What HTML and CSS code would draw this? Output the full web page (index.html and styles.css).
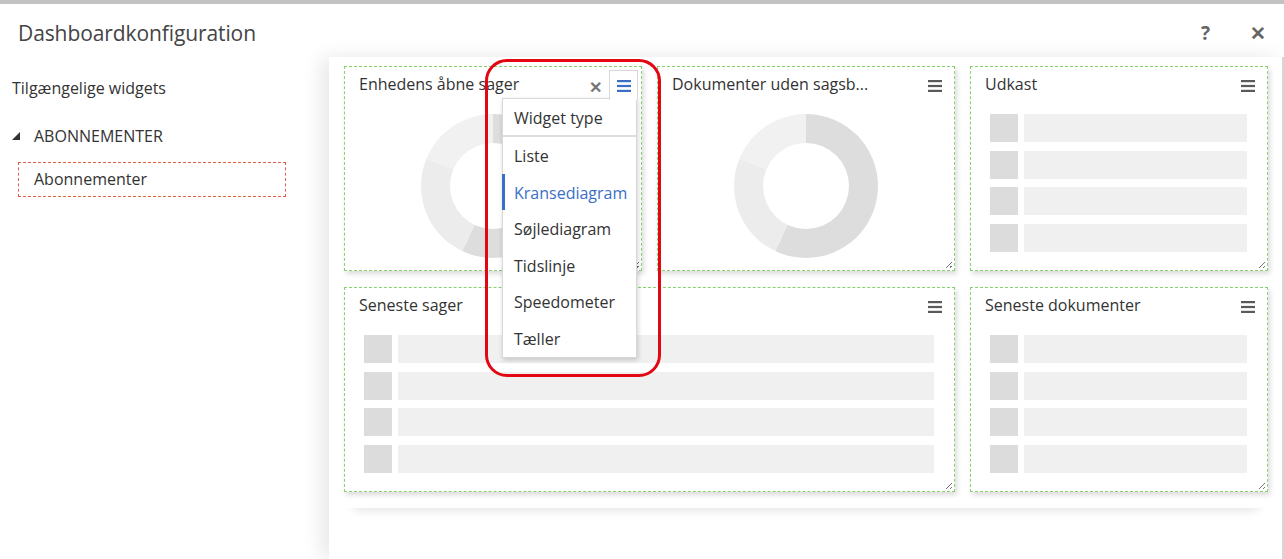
FILE: index.html
```html
<!DOCTYPE html>
<html lang="da">
<head>
    <meta charset="UTF-8">
    <title>Dashboardkonfiguration</title>
    <link rel="stylesheet" href="styles.css">
</head>
<body>
    <div class="topbar"></div>
    <header class="header">
        <h1 class="title">Dashboardkonfiguration</h1>
        <div class="header-actions">
            <span class="help">?</span>
            <span class="close">&#10005;</span>
        </div>
    </header>

    <div class="main">
        <aside class="sidebar">
            <div class="sidebar-title">Tilgængelige widgets</div>
            <div class="group">
                <span class="caret"></span>
                <span>ABONNEMENTER</span>
            </div>
            <div class="widget-source">Abonnementer</div>
        </aside>

        <section class="canvas">
            <div class="grid-wrap">
                <div class="grid">
                    <!-- widget 1 med åben menu -->
                    <div class="widget">
                        <div class="widget-head">
                            <span class="widget-title">Enhedens åbne sager</span>
                        </div>
                        <div class="donut-area"><div class="donut"></div></div>
                        <span class="resize"></span>

                        <span class="widget-x">&#10005;</span>
                        <span class="menu-btn">
                            <svg width="14" height="12" viewBox="0 0 14 12"><rect y="0" width="14" height="2.2" fill="#3a6fc8"/><rect y="4.9" width="14" height="2.2" fill="#3a6fc8"/><rect y="9.8" width="14" height="2.2" fill="#3a6fc8"/></svg>
                        </span>
                        <div class="menu">
                            <div class="menu-head">Widget type</div>
                            <div class="menu-item">Liste</div>
                            <div class="menu-item active">Kransediagram</div>
                            <div class="menu-item">Søjlediagram</div>
                            <div class="menu-item">Tidslinje</div>
                            <div class="menu-item">Speedometer</div>
                            <div class="menu-item">Tæller</div>
                        </div>
                        <div class="highlight"></div>
                    </div>

                    <div class="widget">
                        <div class="widget-head">
                            <span class="widget-title">Dokumenter uden sagsb...</span>
                            <span class="burger"><svg width="14" height="12" viewBox="0 0 14 12"><rect y="0" width="14" height="2.2" fill="#5a5a5a"/><rect y="4.9" width="14" height="2.2" fill="#5a5a5a"/><rect y="9.8" width="14" height="2.2" fill="#5a5a5a"/></svg></span>
                        </div>
                        <div class="donut-area"><div class="donut"></div></div>
                        <span class="resize"></span>
                    </div>

                    <div class="widget">
                        <div class="widget-head">
                            <span class="widget-title">Udkast</span>
                            <span class="burger"><svg width="14" height="12" viewBox="0 0 14 12"><rect y="0" width="14" height="2.2" fill="#5a5a5a"/><rect y="4.9" width="14" height="2.2" fill="#5a5a5a"/><rect y="9.8" width="14" height="2.2" fill="#5a5a5a"/></svg></span>
                        </div>
                        <div class="rows">
                            <div class="row"><span class="sq"></span><span class="bar"></span></div>
                            <div class="row"><span class="sq"></span><span class="bar"></span></div>
                            <div class="row"><span class="sq"></span><span class="bar"></span></div>
                            <div class="row"><span class="sq"></span><span class="bar"></span></div>
                        </div>
                        <span class="resize"></span>
                    </div>

                    <div class="widget wide">
                        <div class="widget-head">
                            <span class="widget-title">Seneste sager</span>
                            <span class="burger"><svg width="14" height="12" viewBox="0 0 14 12"><rect y="0" width="14" height="2.2" fill="#5a5a5a"/><rect y="4.9" width="14" height="2.2" fill="#5a5a5a"/><rect y="9.8" width="14" height="2.2" fill="#5a5a5a"/></svg></span>
                        </div>
                        <div class="rows">
                            <div class="row"><span class="sq"></span><span class="bar"></span></div>
                            <div class="row"><span class="sq"></span><span class="bar"></span></div>
                            <div class="row"><span class="sq"></span><span class="bar"></span></div>
                            <div class="row"><span class="sq"></span><span class="bar"></span></div>
                        </div>
                        <span class="resize"></span>
                    </div>

                    <div class="widget">
                        <div class="widget-head">
                            <span class="widget-title">Seneste dokumenter</span>
                            <span class="burger"><svg width="14" height="12" viewBox="0 0 14 12"><rect y="0" width="14" height="2.2" fill="#5a5a5a"/><rect y="4.9" width="14" height="2.2" fill="#5a5a5a"/><rect y="9.8" width="14" height="2.2" fill="#5a5a5a"/></svg></span>
                        </div>
                        <div class="rows">
                            <div class="row"><span class="sq"></span><span class="bar"></span></div>
                            <div class="row"><span class="sq"></span><span class="bar"></span></div>
                            <div class="row"><span class="sq"></span><span class="bar"></span></div>
                            <div class="row"><span class="sq"></span><span class="bar"></span></div>
                        </div>
                        <span class="resize"></span>
                    </div>
                </div>
            </div>
        </section>
    </div>
</body>
</html>
```
FILE: styles.css
```css
* {
    margin: 0;
    padding: 0;
    box-sizing: border-box;
}
body {
    font-family: "Open Sans", "Noto Sans", sans-serif;
    background-color: #ffffff;
    color: #333333;
    font-size: 16px;
    width: 1284px;
    height: 559px;
    overflow: hidden;
}

.topbar {
    height: 4px;
    background-color: #c2c2c2;
}

.header {
    height: 53px;
    display: flex;
    align-items: center;
    justify-content: space-between;
    padding: 4px 18px 0 18px;
}
.title {
    font-size: 21px;
    font-weight: normal;
    color: #444444;
    letter-spacing: -0.1px;
}
.header-actions {
    display: flex;
    gap: 40px;
    align-items: center;
    color: #666666;
    font-weight: bold;
}
.help { font-size: 19px; }
.close { font-size: 19px; }

.main {
    display: flex;
    height: 502px;
}

.sidebar {
    width: 329px;
    flex-shrink: 0;
    padding: 19px 0 0 12px;
}
.sidebar-title {
    font-size: 16px;
    line-height: 24px;
    color: #333333;
}
.group {
    display: flex;
    align-items: center;
    gap: 14px;
    margin-top: 24px;
    font-size: 16px;
    line-height: 24px;
    color: #333333;
}
.caret {
    width: 0;
    height: 0;
    border-left: 8px solid transparent;
    border-bottom: 8px solid #333333;
}
.widget-source {
    width: 268px;
    height: 35px;
    margin: 14px 0 0 6px;
    border: 1px dashed #e0604a;
    padding: 0 0 0 15px;
    line-height: 33px;
    font-size: 16px;
}

.canvas {
    flex: 1;
    background-color: #ffffff;
    box-shadow: -8px 0 18px rgba(0, 0, 0, 0.09);
    border-right: 2px solid #d6d6d6;
    padding: 9px 0 0 15px;
    position: relative;
}

.grid-wrap {
    width: 924px;
    padding-bottom: 16px;
    box-shadow: 0 12px 10px -10px rgba(0, 0, 0, 0.12);
}
.grid {
    display: grid;
    grid-template-columns: 298px 298px 298px;
    grid-template-rows: 205px 205px;
    column-gap: 15px;
    row-gap: 16px;
}

.widget {
    position: relative;
    background: #ffffff;
    border: 1px dashed #86d26e;
    box-shadow: 2px 3px 5px rgba(0, 0, 0, 0.14);
}
.widget.wide {
    grid-column: span 2;
}
.widget-head {
    display: flex;
    justify-content: space-between;
    align-items: center;
    height: 34px;
    padding: 0 12px 0 14px;
}
.widget-title {
    font-size: 16px;
    color: #333333;
}
.burger {
    display: flex;
    margin-top: 4px;
}

.donut-area {
    display: flex;
    justify-content: center;
    padding-top: 13px;
}
.donut {
    width: 144px;
    height: 144px;
    border-radius: 50%;
    background: conic-gradient(#dddddd 0deg 205deg, #ececec 205deg 292deg, #f1f1f1 292deg 360deg);
    position: relative;
}
.donut::after {
    content: "";
    position: absolute;
    left: 29px;
    top: 29px;
    width: 86px;
    height: 86px;
    border-radius: 50%;
    background: #ffffff;
}

.rows {
    display: flex;
    flex-direction: column;
    gap: 8.5px;
    padding: 13px 20px 0 19px;
}
.row {
    display: flex;
    gap: 6px;
    height: 28px;
}
.sq {
    width: 28px;
    background: #dcdcdc;
}
.bar {
    flex: 1;
    background: #f0f0f0;
}

.resize {
    position: absolute;
    right: 2px;
    bottom: 2px;
    width: 6px;
    height: 6px;
    background: linear-gradient(135deg, transparent 45%, #777 45%, #777 55%, transparent 55%, transparent 75%, #777 75%, #777 85%, transparent 85%);
}

/* åben widget menu */
.widget-x {
    position: absolute;
    left: 244px;
    top: 9px;
    font-size: 16px;
    font-weight: bold;
    color: #777777;
}
.menu-btn {
    position: absolute;
    left: 264px;
    top: 3px;
    width: 29px;
    height: 30px;
    background: #ffffff;
    border: 1px solid #d8d8d8;
    border-bottom: none;
    display: flex;
    justify-content: center;
    padding-top: 9px;
    z-index: 3;
}
.menu {
    position: absolute;
    left: 157px;
    top: 31px;
    width: 135px;
    background: #ffffff;
    border: 1px solid #d8d8d8;
    box-shadow: 1px 2px 5px rgba(0, 0, 0, 0.18);
    z-index: 2;
    padding-bottom: 1px;
}
.menu-head {
    height: 38px;
    line-height: 38px;
    padding-left: 11px;
    font-size: 16px;
    border-bottom: 2px solid #dddddd;
    color: #333333;
}
.menu-item {
    height: 36.5px;
    line-height: 38px;
    padding-left: 9px;
    font-size: 16px;
    color: #333333;
    border-left: 3px solid transparent;
    margin-left: -1px;
}
.menu-item.active {
    color: #3a6fc8;
    border-left-color: #3a6fc8;
}
.highlight {
    position: absolute;
    left: 140px;
    top: -8px;
    width: 176px;
    height: 318px;
    border: 3px solid #e30613;
    border-radius: 22px;
    z-index: 4;
    pointer-events: none;
}
```
